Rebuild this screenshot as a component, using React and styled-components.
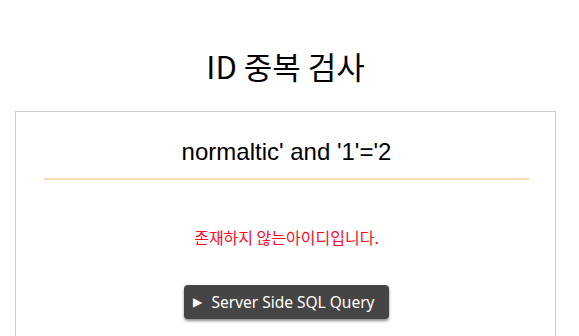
import React from 'react'
import styled, { createGlobalStyle } from 'styled-components'

const GlobalStyle = createGlobalStyle`
  body {
    margin: 0;
    background: #fff;
    font-family: "Noto Sans", "Noto Sans CJK KR", sans-serif;
  }
`

const Page = styled.div`
  padding: 0 23px 40px 15px;
`

const Title = styled.h1`
  margin: 0;
  padding-top: 47px;
  padding-bottom: 27px;
  text-align: center;
  font-family: "Noto Sans CJK KR", "Noto Sans", sans-serif;
  font-weight: 400;
  font-size: 31px;
  line-height: 37px;
  color: #000;
`

const Card = styled.section`
  border: 1px solid #cccccc;
  padding: 26px 26px 60px 28px;
  display: flex;
  flex-direction: column;
  align-items: stretch;
`

const Query = styled.div`
  text-align: center;
  font-family: "Liberation Sans", Arial, sans-serif;
  font-size: 24px;
  line-height: 28px;
  color: #000;
  padding-bottom: 12px;
  border-bottom: 2px solid #f5deb3;
`

const Message = styled.p`
  margin: 46px 0 0;
  text-align: center;
  font-family: "Noto Sans CJK KR", sans-serif;
  font-size: 16px;
  line-height: 22px;
  color: ${({ tone }) => (tone === 'error' ? '#ff0a1e' : '#333')};
`

const Actions = styled.div`
  display: flex;
  justify-content: center;
  margin-top: 37px;
`

const ToggleButton = styled.button`
  display: flex;
  align-items: center;
  gap: 9px;
  height: 34px;
  padding: 0 14px 0 9px;
  border: none;
  border-radius: 4px;
  background: #454545;
  color: #fff;
  font-family: "Noto Sans", sans-serif;
  font-size: 15.5px;
  box-shadow: 0 2px 3px rgba(0, 0, 0, 0.45);
  cursor: pointer;
`

const Arrow = styled.span`
  font-size: 12px;
  line-height: 1;
`

export default function App() {
  return (
    <>
      <GlobalStyle />
      <Page>
        <Title>ID 중복 검사</Title>
        <Card>
          <Query>normaltic' and '1'='2</Query>
          <Message tone="error">존재하지 않는아이디입니다.</Message>
          <Actions>
            <ToggleButton>
              <Arrow>▶</Arrow>
              Server Side SQL Query
            </ToggleButton>
          </Actions>
        </Card>
      </Page>
    </>
  )
}
